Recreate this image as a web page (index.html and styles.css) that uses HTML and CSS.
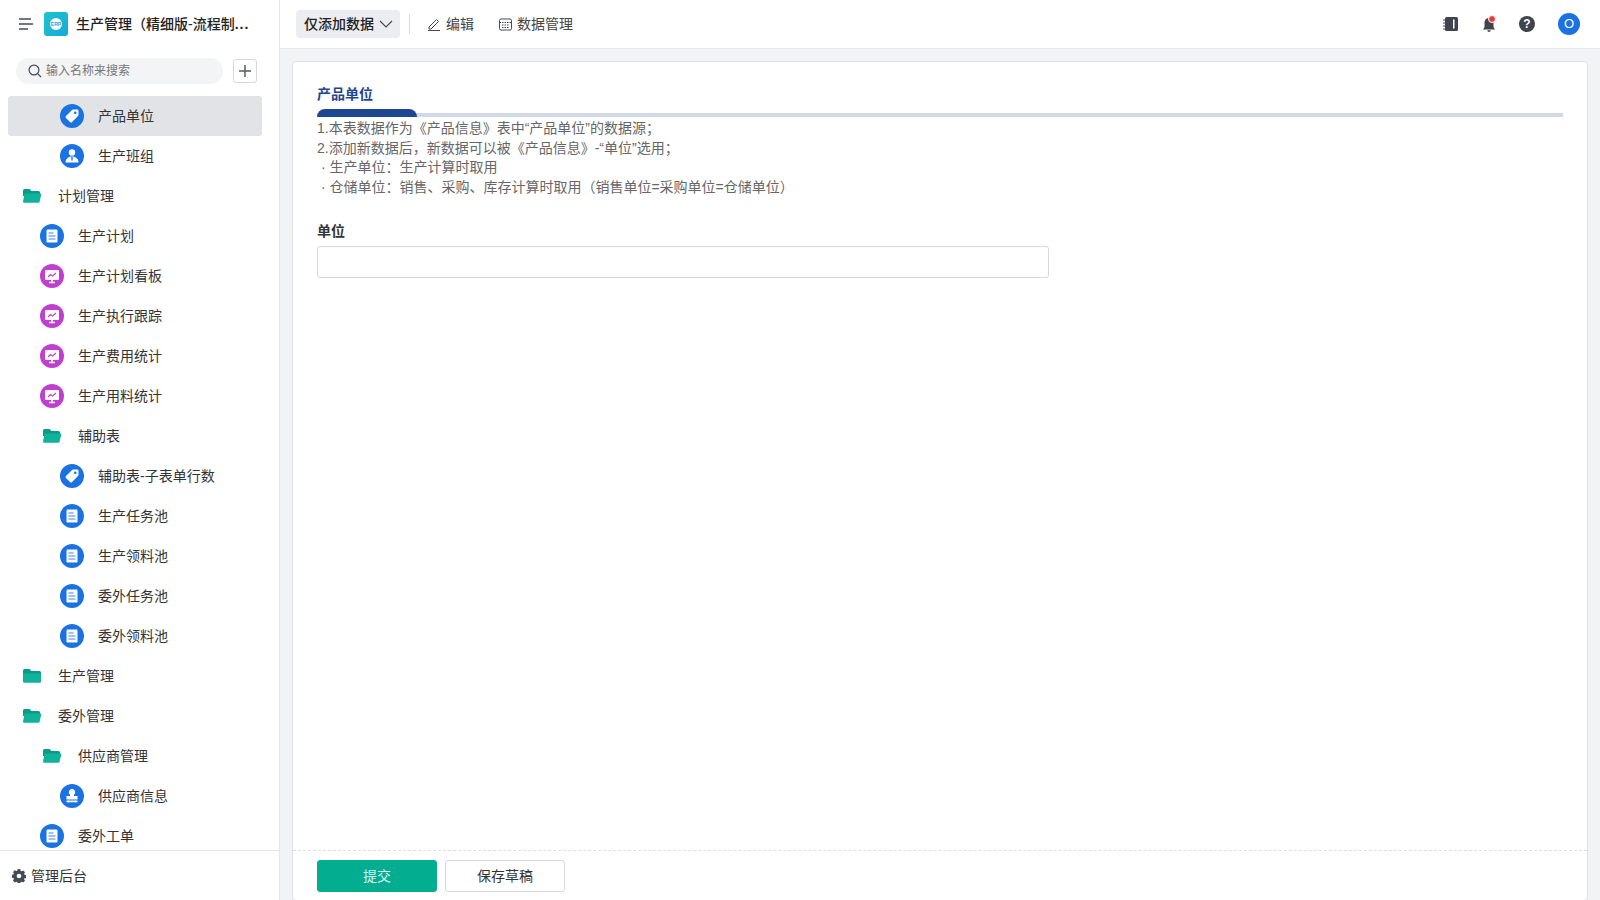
FILE: index.html
```html
<!DOCTYPE html>
<html lang="zh-CN">
<head>
<meta charset="utf-8">
<title>生产管理</title>
<link rel="stylesheet" href="styles.css">
</head>
<body>
<svg class="defs" width="0" height="0">
	<symbol id="i-doc" viewBox="0 0 24 24">
		<circle cx="12" cy="12" r="12" fill="#1a73e0"/>
		<rect x="6.5" y="5.5" width="11" height="13" rx="1.2" fill="#fff"/>
		<path d="M8.5 9h5M8.5 12h7M8.5 15h7" stroke="#7fb0ee" stroke-width="1.4"/>
	</symbol>
	<symbol id="i-tag" viewBox="0 0 24 24">
		<circle cx="12" cy="12" r="12" fill="#1a73e0"/>
		<path d="M13 5.5h4.2a1.3 1.3 0 0 1 1.3 1.3V11a1.5 1.5 0 0 1-.5 1.1l-6 6a1.4 1.4 0 0 1-2 0l-4-4a1.4 1.4 0 0 1 0-2l6-6A1.5 1.5 0 0 1 13 5.500z" fill="#fff"/>
		<circle cx="15.300" cy="8.700" r="1.300" fill="#1a73e0"/>
	</symbol>
	<symbol id="i-staff" viewBox="0 0 24 24">
		<circle cx="12" cy="12" r="12" fill="#1a73e0"/>
		<circle cx="12" cy="8.500" r="3.200" fill="#fff"/>
		<path d="M5.500 18.500c0-3.500 2.800-6 6.500-6s6.500 2.500 6.500 6z" fill="#fff"/>
		<path d="M12 12.500l-1 1.500 1 3.500 1-3.500z" fill="#1a73e0"/>
	</symbol>
	<symbol id="i-stamp" viewBox="0 0 24 24">
		<circle cx="12" cy="12" r="12" fill="#1a73e0"/>
		<path d="M12 5a3.200 3.200 0 0 0-2 5.700V12H6.500v3.500h11V12H14v-1.300A3.200 3.200 0 0 0 12 5z" fill="#fff"/>
		<rect x="6.500" y="16.500" width="11" height="1.800" fill="#fff"/>
	</symbol>
	<symbol id="i-board" viewBox="0 0 24 24">
		<circle cx="12" cy="12" r="12" fill="#c03fd0"/>
		<rect x="5" y="6" width="14" height="10" rx="1" fill="#fff"/>
		<path d="M9 18.500h6M12 16v2.500" stroke="#fff" stroke-width="1.500"/>
		<path d="M8 13l2.500-2.500 2 1.500L16 9" fill="none" stroke="#c03fd0" stroke-width="1.200"/>
	</symbol>
	<symbol id="i-open" viewBox="0 0 20 16">
		<path d="M1 2.500A1.500 1.500 0 0 1 2.500 1h5l2 2h7A1.500 1.500 0 0 1 18 4.500V8H1z" fill="#0b9a86"/>
		<path d="M2.500 5.500H19.500l-2 8.500a1 1 0 0 1-1 .8H2a1 1 0 0 1-1-1z" fill="#0fb39b"/>
	</symbol>
	<symbol id="i-closed" viewBox="0 0 20 16">
		<path d="M1 2.500A1.500 1.500 0 0 1 2.500 1h5l2 2h8A1.500 1.500 0 0 1 19 4.500V7H1z" fill="#0b9a86"/>
		<path d="M1 5.500h18v8a1.300 1.300 0 0 1-1.300 1.300H2.300A1.300 1.300 0 0 1 1 13.500z" fill="#0fb39b"/>
	</symbol>
</svg>

<div class="app">
	<aside class="sidebar">
		<div class="brand">
			<svg class="burger" width="14" height="12" viewBox="0 0 14 12"><path d="M0 1h12M0 6h14M0 11h9" stroke="#444b55" stroke-width="1.500"/></svg>
			<span class="logo"><span class="logo-dot">ERP</span></span>
			<span class="brand-name">生产管理（精细版-流程制<span class="dots">...</span></span>
		</div>
		<div class="search-row">
			<div class="search">
				<svg width="14" height="14" viewBox="0 0 14 14"><circle cx="6" cy="6" r="4.900" fill="none" stroke="#444b55" stroke-width="1.200"/><path d="M9.600 9.600L13 13" stroke="#444b55" stroke-width="1.200"/></svg>
				<span>输入名称来搜索</span>
			</div>
			<div class="add-btn"><svg width="14" height="14" viewBox="0 0 14 14"><path d="M7 1v12M1 7h12" stroke="#555b65" stroke-width="1.500"/></svg></div>
		</div>
		<ul class="menu">
			<li class="item lv2 active"><svg class="ico"><use href="#i-tag"/></svg>产品单位</li>
			<li class="item lv2"><svg class="ico"><use href="#i-staff"/></svg>生产班组</li>
			<li class="item lv0"><svg class="folder"><use href="#i-open"/></svg>计划管理</li>
			<li class="item lv1"><svg class="ico"><use href="#i-doc"/></svg>生产计划</li>
			<li class="item lv1"><svg class="ico"><use href="#i-board"/></svg>生产计划看板</li>
			<li class="item lv1"><svg class="ico"><use href="#i-board"/></svg>生产执行跟踪</li>
			<li class="item lv1"><svg class="ico"><use href="#i-board"/></svg>生产费用统计</li>
			<li class="item lv1"><svg class="ico"><use href="#i-board"/></svg>生产用料统计</li>
			<li class="item lv1f"><svg class="folder"><use href="#i-open"/></svg>辅助表</li>
			<li class="item lv2"><svg class="ico"><use href="#i-tag"/></svg>辅助表-子表单行数</li>
			<li class="item lv2"><svg class="ico"><use href="#i-doc"/></svg>生产任务池</li>
			<li class="item lv2"><svg class="ico"><use href="#i-doc"/></svg>生产领料池</li>
			<li class="item lv2"><svg class="ico"><use href="#i-doc"/></svg>委外任务池</li>
			<li class="item lv2"><svg class="ico"><use href="#i-doc"/></svg>委外领料池</li>
			<li class="item lv0"><svg class="folder"><use href="#i-closed"/></svg>生产管理</li>
			<li class="item lv0"><svg class="folder"><use href="#i-open"/></svg>委外管理</li>
			<li class="item lv1f"><svg class="folder"><use href="#i-open"/></svg>供应商管理</li>
			<li class="item lv2"><svg class="ico"><use href="#i-stamp"/></svg>供应商信息</li>
			<li class="item lv1"><svg class="ico"><use href="#i-doc"/></svg>委外工单</li>
		</ul>
		<div class="admin">
			<svg width="14" height="14" viewBox="0 0 14 14"><path d="M7 0l1.300.2.400 1.700 1 .4 1.500-.9 1.800 1.800-.9 1.500.4 1 1.700.4v2.800l-1.700.4-.4 1 .9 1.500-1.800 1.800-1.500-.9-1 .4-.4 1.700H5.700l-.4-1.700-1-.4-1.500.9L1 11.600l.9-1.500-.4-1-1.700-.4V5.900l1.700-.4.4-1L1 3l1.800-1.800 1.500.9 1-.4.400-1.700z" fill="#444b55"/><circle cx="7" cy="7" r="2.300" fill="#fff"/></svg>
			<span>管理后台</span>
		</div>
	</aside>

	<div class="main">
		<header class="topbar">
			<div class="mode">仅添加数据<svg width="14" height="8" viewBox="0 0 14 8"><path d="M1 1l6 6 6-6" fill="none" stroke="#444b55" stroke-width="1.200"/></svg></div>
			<span class="split"></span>
			<a class="tool"><svg width="14" height="14" viewBox="0 0 14 14"><path d="M2 10L9.500 2.500l2 2L4 12H2zM1 13.500h12" fill="none" stroke="#444b55" stroke-width="1"/></svg>编辑</a>
			<a class="tool"><svg width="13" height="13" viewBox="0 0 13 13"><rect x=".5" y="1" width="12" height="11" rx="1.500" fill="none" stroke="#444b55"/><path d="M.5 4.500h12M3 7h7M3 9.500h7" stroke="#444b55" stroke-dasharray="1.500 1"/></svg>数据管理</a>
			<div class="top-right">
				<svg width="16" height="16" viewBox="0 0 16 16"><rect x="2" y="1" width="13" height="14" rx="1.500" fill="#3f444d"/><path d="M0 4h3M0 7h3M0 10h3M0 13h3" stroke="#3f444d"/><rect x="10" y="3.500" width="1.500" height="9" fill="#fff"/></svg>
				<span class="bell"><svg width="16" height="16" viewBox="0 0 16 16"><path d="M8 2a4.500 4.500 0 0 0-4.500 4.500V11L2 13.500h12L12.500 11V6.500A4.500 4.500 0 0 0 8 2z" fill="#3f444d"/><path d="M6.300 14.300a1.700 1.700 0 0 0 3.400 0z" fill="#3f444d"/></svg><i class="dot"></i></span>
				<span class="help">?</span>
				<span class="avatar">O</span>
			</div>
		</header>
		<div class="content">
			<section class="card">
				<div class="card-body">
					<div class="sec-title">产品单位</div>
					<div class="sec-bar"><span></span></div>
					<p class="desc">1.本表数据作为《产品信息》表中“产品单位”的数据源；<br>2.添加新数据后，新数据可以被《产品信息》-“单位”选用；<br>&nbsp;· 生产单位：生产计算时取用<br>&nbsp;· 仓储单位：销售、采购、库存计算时取用（销售单位=采购单位=仓储单位）</p>
					<label class="field-label">单位</label>
					<input class="field" type="text">
				</div>
				<div class="card-foot">
					<button class="btn btn-primary">提交</button>
					<button class="btn">保存草稿</button>
				</div>
			</section>
		</div>
	</div>
</div>
</body>
</html>
```

FILE: styles.css
```css
* { box-sizing: border-box; }
html, body { margin: 0; height: 100%; overflow: hidden; }
body { font-family: "Liberation Sans", "Noto Sans CJK SC", sans-serif; font-size: 14px; line-height: 20px; color: #333; background: #fff; }
.defs { position: absolute; }

.app { display: flex; height: 900px; }

/* sidebar */
.sidebar { width: 280px; flex: none; display: flex; flex-direction: column; border-right: 1px solid #e4e6ea; background: #fff; }
.brand { height: 48px; flex: none; display: flex; align-items: center; padding-left: 19px; }
.burger { margin-right: 11px; }
.logo { width: 24px; height: 24px; border-radius: 3px; background: linear-gradient(135deg, #1fc4c9, #17a9dc); display: flex; align-items: center; justify-content: center; }
.logo-dot { width: 12px; height: 12px; border-radius: 50%; background: #fff; color: #17a9dc; font-size: 5px; font-weight: bold; line-height: 12px; text-align: center; }
.brand-name { margin-left: 8px; font-weight: 500; color: #222; white-space: nowrap; }
.dots { letter-spacing: 1px; font-weight: bold; }
.search-row { height: 26px; flex: none; margin-top: 10px; margin-bottom: 12px; padding-left: 16px; display: flex; align-items: center; }
.search { width: 207px; height: 26px; border-radius: 13px; background: #f3f4f6; display: flex; align-items: center; padding-left: 12px; gap: 4px; font-size: 12px; color: #777; }
.add-btn { width: 24px; height: 24px; margin-left: 10px; border: 1px solid #d5d8dd; border-radius: 3px; display: flex; align-items: center; justify-content: center; }

.menu { list-style: none; margin: 0; padding: 0 0 0 8px; flex: 1; overflow: hidden; min-height: 0; }
.item { width: 254px; height: 40px; display: flex; align-items: center; border-radius: 3px; color: #333; white-space: nowrap; }
.item.active { background: #e1e3e6; }
.ico { width: 24px; height: 24px; flex: none; margin-right: 14px; }
.folder { width: 20px; height: 16px; flex: none; margin-right: 16px; }
.lv0 { padding-left: 14px; }
.lv1 { padding-left: 32px; }
.lv1f { padding-left: 34px; }
.lv2 { padding-left: 52px; }

.admin { height: 50px; flex: none; border-top: 1px solid #e4e6ea; display: flex; align-items: center; gap: 5px; padding-left: 12px; color: #333; }

/* top bar */
.main { flex: 1; min-width: 0; display: flex; flex-direction: column; background: #f2f3f5; }
.topbar { height: 49px; flex: none; background: #fff; border-bottom: 1px solid #e6e8eb; display: flex; align-items: center; padding-left: 16px; }
.mode { width: 104px; height: 28px; border-radius: 4px; background: #ebedf0; display: flex; align-items: center; gap: 5px; padding-left: 8px; font-weight: 500; color: #222; }
.split { width: 1px; height: 20px; margin: 0 17px 0 9px; background: #d9dbdf; }
.tool { display: flex; align-items: center; gap: 5px; color: #444; margin-right: 25px; }
.top-right { margin-left: auto; display: flex; align-items: center; padding-right: 20px; }
.top-right > svg { margin-right: 22px; }
.bell { position: relative; width: 16px; height: 16px; margin-right: 22px; }
.bell svg { display: block; }
.dot { position: absolute; top: -1px; right: 1px; width: 8px; height: 8px; border: 1px solid #fff; border-radius: 50%; background: #ec3b3b; }
.help { width: 16px; height: 16px; margin-right: 23px; border-radius: 50%; background: #3f444d; color: #fff; font-size: 12px; font-weight: bold; line-height: 16px; text-align: center; }
.avatar { width: 22px; height: 22px; border-radius: 50%; background: #1a73e0; color: #fff; font-size: 13px; line-height: 22px; text-align: center; }

/* form card */
.content { flex: 1; min-height: 0; padding: 12px 12px 0 12px; }
.card { height: 840px; background: #fff; border: 1px solid #dfe1e5; border-radius: 4px; display: flex; flex-direction: column; }
.card-body { flex: 1; padding: 22px 24px 0 24px; }
.sec-title { line-height: 20px; font-weight: 600; color: #1f4690; }
.sec-bar { height: 8px; margin-top: 5px; position: relative; }
.sec-bar::before { content: ""; position: absolute; left: 0; right: 0; bottom: 0; height: 4px; background: #d3d8e6; }
.sec-bar span { position: absolute; left: 0; top: 0; width: 100px; height: 8px; background: #1f4690; border-radius: 8px 8px 0 0; }
.desc { margin: 2px 0 0; line-height: 19.6px; color: #666; }
.field-label { display: block; margin-top: 24px; line-height: 20px; font-weight: 600; color: #333; }
.field { display: block; width: 732px; height: 32px; margin-top: 5px; border: 1px solid #d5d8dd; border-radius: 3px; background: #fff; }
.card-foot { height: 50px; flex: none; border-top: 1px dashed #dcdfe3; display: flex; gap: 8px; padding: 9px 0 0 24px; }
.btn { width: 120px; height: 32px; padding: 0; border: 1px solid #d5d8dd; border-radius: 3px; background: #fff; font: inherit; color: #333; }
.btn-primary { background: #03ad8f; border-color: #03ad8f; color: #d6f5ee; }
```
